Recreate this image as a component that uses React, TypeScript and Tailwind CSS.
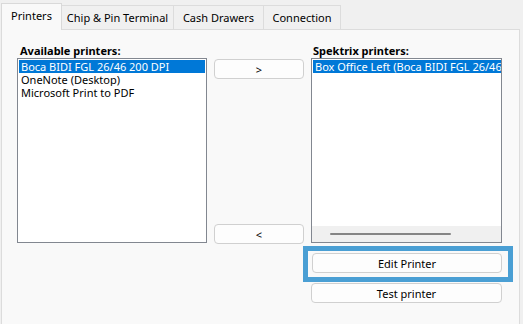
import React from 'react';

const tabs = [
  { label: 'Printers', width: 'w-[61px]', active: true },
  { label: 'Chip & Pin Terminal', width: 'w-[112px]', active: false },
  { label: 'Cash Drawers', width: 'w-[90px]', active: false },
  { label: 'Connection', width: 'w-[77px]', active: false },
];

const available = ['Boca BIDI FGL 26/46 200 DPI', 'OneNote (Desktop)', 'Microsoft Print to PDF'];

function WinButton({ children, className = '' }: { children: React.ReactNode; className?: string }) {
  return (
    <button
      className={`h-[20px] w-full rounded-[4px] border border-[#d0d0d0] bg-[#fdfdfd] text-[11px] leading-none text-black ${className}`}
    >
      {children}
    </button>
  );
}

export default function App() {
  return (
    <div className="h-[324px] w-[523px] overflow-hidden bg-[#f0f0f0] pl-[1px] pt-[3px] font-['Noto_Sans',sans-serif] text-[11px] text-black">
      {/* tab strip */}
      <div className="relative z-10 flex h-[27px] items-end">
        {tabs.map((t) =>
          t.active ? (
            <div
              key={t.label}
              className={`${t.width} flex h-[27px] items-center justify-center border-x border-t border-[#d9d9d9] bg-[#f9f9f9] pb-[1px]`}
            >
              {t.label}
            </div>
          ) : (
            <div
              key={t.label}
              className={`${t.width} flex h-[25px] items-center justify-center border-r border-t border-b border-[#dcdcdc] bg-[#f0f0f0] pt-[1px]`}
            >
              {t.label}
            </div>
          )
        )}
      </div>

      {/* panel */}
      <div className="-mt-px h-[300px] w-[519px] border border-[#dcdcdc] bg-[#f9f9f9]">
        <div className="flex gap-[7px] pl-[15px] pt-[13px]">
          {/* left column */}
          <div className="flex w-[190px] flex-col">
            <div className="h-[15px] pl-[3px] font-bold leading-[15px]">Available printers:</div>
            <div className="h-[185px] border border-[#828790] bg-white px-[1px] pt-[1px]">
              {available.map((p, i) => (
                <div
                  key={p}
                  className={`h-[13px] overflow-hidden whitespace-nowrap pl-[2px] leading-[13px] ${i === 0 ? 'bg-[#0078d7] text-white' : ''}`}
                >
                  {p}
                </div>
              ))}
            </div>
          </div>

          {/* middle column */}
          <div className="flex w-[90px] flex-col pt-[16px]">
            <WinButton>&gt;</WinButton>
            <WinButton className="mt-[145px]">&lt;</WinButton>
          </div>

          {/* right column */}
          <div className="flex w-[191px] flex-col">
            <div className="h-[15px] pl-[2px] font-bold leading-[15px]">Spektrix printers:</div>
            <div className="flex h-[185px] flex-col border border-[#828790] bg-white">
              <div className="flex-1 overflow-hidden px-[1px] pt-[1px]">
                <div className="h-[13px] w-[188px] overflow-hidden whitespace-nowrap bg-[#0078d7] pl-[2px] leading-[13px] text-white">
                  Box Office Left (Boca BIDI FGL 26/46 200 DPI)
                </div>
              </div>
              <div className="flex h-[16px] items-center bg-[#f0f0f0] pl-[18px]">
                <div className="h-[2px] w-[121px] rounded-full bg-[#858585]" />
              </div>
            </div>
            <div className="-ml-[8px] -mr-[11px] mt-[3px] h-[36px] border-[5px] border-[#4a9fd4] pl-[4px] pr-[6px] pt-[2px]">
              <WinButton>Edit Printer</WinButton>
            </div>
            <WinButton className="mt-[1px]">Test printer</WinButton>
          </div>
        </div>
      </div>
    </div>
  );
}
